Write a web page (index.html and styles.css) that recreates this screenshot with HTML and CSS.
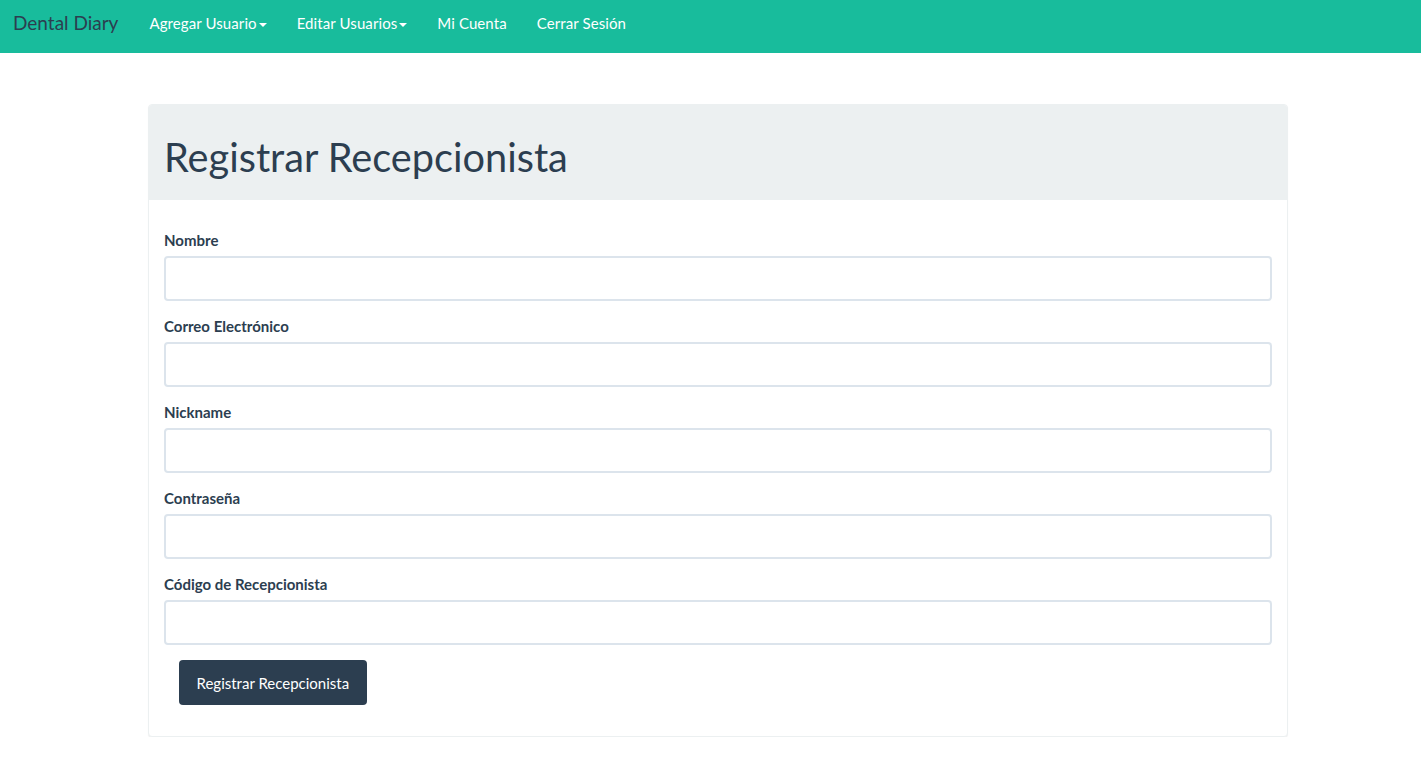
FILE: index.html
```html
<!DOCTYPE html>
<html lang="es">
<head>
<meta charset="utf-8">
<title>Dental Diary</title>
<link rel="stylesheet" href="styles.css">
</head>
<body>
<nav class="navbar">
  <a class="brand" href="#">Dental Diary</a>
  <ul class="nav">
    <li><a href="#">Agregar Usuario <span class="caret"></span></a></li>
    <li><a href="#">Editar Usuarios <span class="caret"></span></a></li>
    <li><a href="#">Mi Cuenta</a></li>
    <li><a href="#">Cerrar Sesión</a></li>
  </ul>
</nav>
<main class="wrap">
  <section class="panel">
    <div class="panel-heading"><h1>Registrar Recepcionista</h1></div>
    <form class="panel-body">
      <div class="form-group"><label>Nombre</label><input class="form-control" type="text"></div>
      <div class="form-group"><label>Correo Electrónico</label><input class="form-control" type="email"></div>
      <div class="form-group"><label>Nickname</label><input class="form-control" type="text"></div>
      <div class="form-group"><label>Contraseña</label><input class="form-control" type="password"></div>
      <div class="form-group"><label>Código de Recepcionista</label><input class="form-control" type="text"></div>
      <div class="actions"><button class="btn" type="button">Registrar Recepcionista</button></div>
    </form>
  </section>
</main>
</body>
</html>
```

FILE: styles.css
```css
* { box-sizing: border-box; }
html, body { margin: 0; padding: 0; }
body {
  font-family: Lato, "Open Sans", sans-serif;
  font-size: 15px;
  line-height: 1.42857;
  color: #2c3e50;
  background: #fff;
}
.navbar {
  display: flex;
  align-items: flex-start;
  height: 53px;
  background: #18bc9c;
}
.brand {
  padding: 0 15px 0 13px;
  font-size: 19px;
  color: #2c3e50;
  text-decoration: none;
  line-height: 46px;
}
.nav {
  display: flex;
  list-style: none;
  margin: 0 0 0 1px;
  padding: 0;
}
.nav a {
  display: block;
  padding: 0 15px;
  line-height: 47px;
  color: #fff;
  text-decoration: none;
  font-size: 15px;
  letter-spacing: 0.1px;
}
.caret {
  display: inline-block;
  width: 0;
  height: 0;
  margin-left: -2px;
  vertical-align: middle;
  border-top: 4px solid #fff;
  border-left: 4px solid transparent;
  border-right: 4px solid transparent;
}
.wrap {
  padding: 51px 0 0 148px;
  width: 1288px;
}
.panel {
  border: 1px solid #ecf0f1;
  border-radius: 4px;
  box-shadow: 0 1px 1px rgba(0,0,0,0.06);
  background: #fff;
}
.panel-heading {
  background: #ecf0f1;
  border-radius: 3px 3px 0 0;
  height: 95px;
  padding: 0 15px;
  display: flex;
  align-items: center;
}
.panel-heading h1 {
  margin: 9px 0 0 0;
  font-size: 39.7px;
  font-weight: 400;
  line-height: 1.1;
  color: #2c3e50;
}
.panel-body {
  padding: 30px 15px 31px;
}
.form-group { margin-bottom: 15px; }
label {
  display: block;
  font-weight: 700;
  margin-bottom: 5px;
  font-size: 15px;
  line-height: 21px;
}
.form-control {
  display: block;
  width: 100%;
  height: 45px;
  border: 2px solid #dce4ec;
  border-radius: 4px;
  padding: 10px 15px;
  font: inherit;
  background: #fff;
}
.actions {
  padding: 0 15px;
}
.btn {
  height: 45px;
  padding: 0 17.5px;
  background: #2c3e50;
  color: #fff;
  border: 0;
  border-radius: 4px;
  font-family: inherit;
  font-size: 15px;
}
```
